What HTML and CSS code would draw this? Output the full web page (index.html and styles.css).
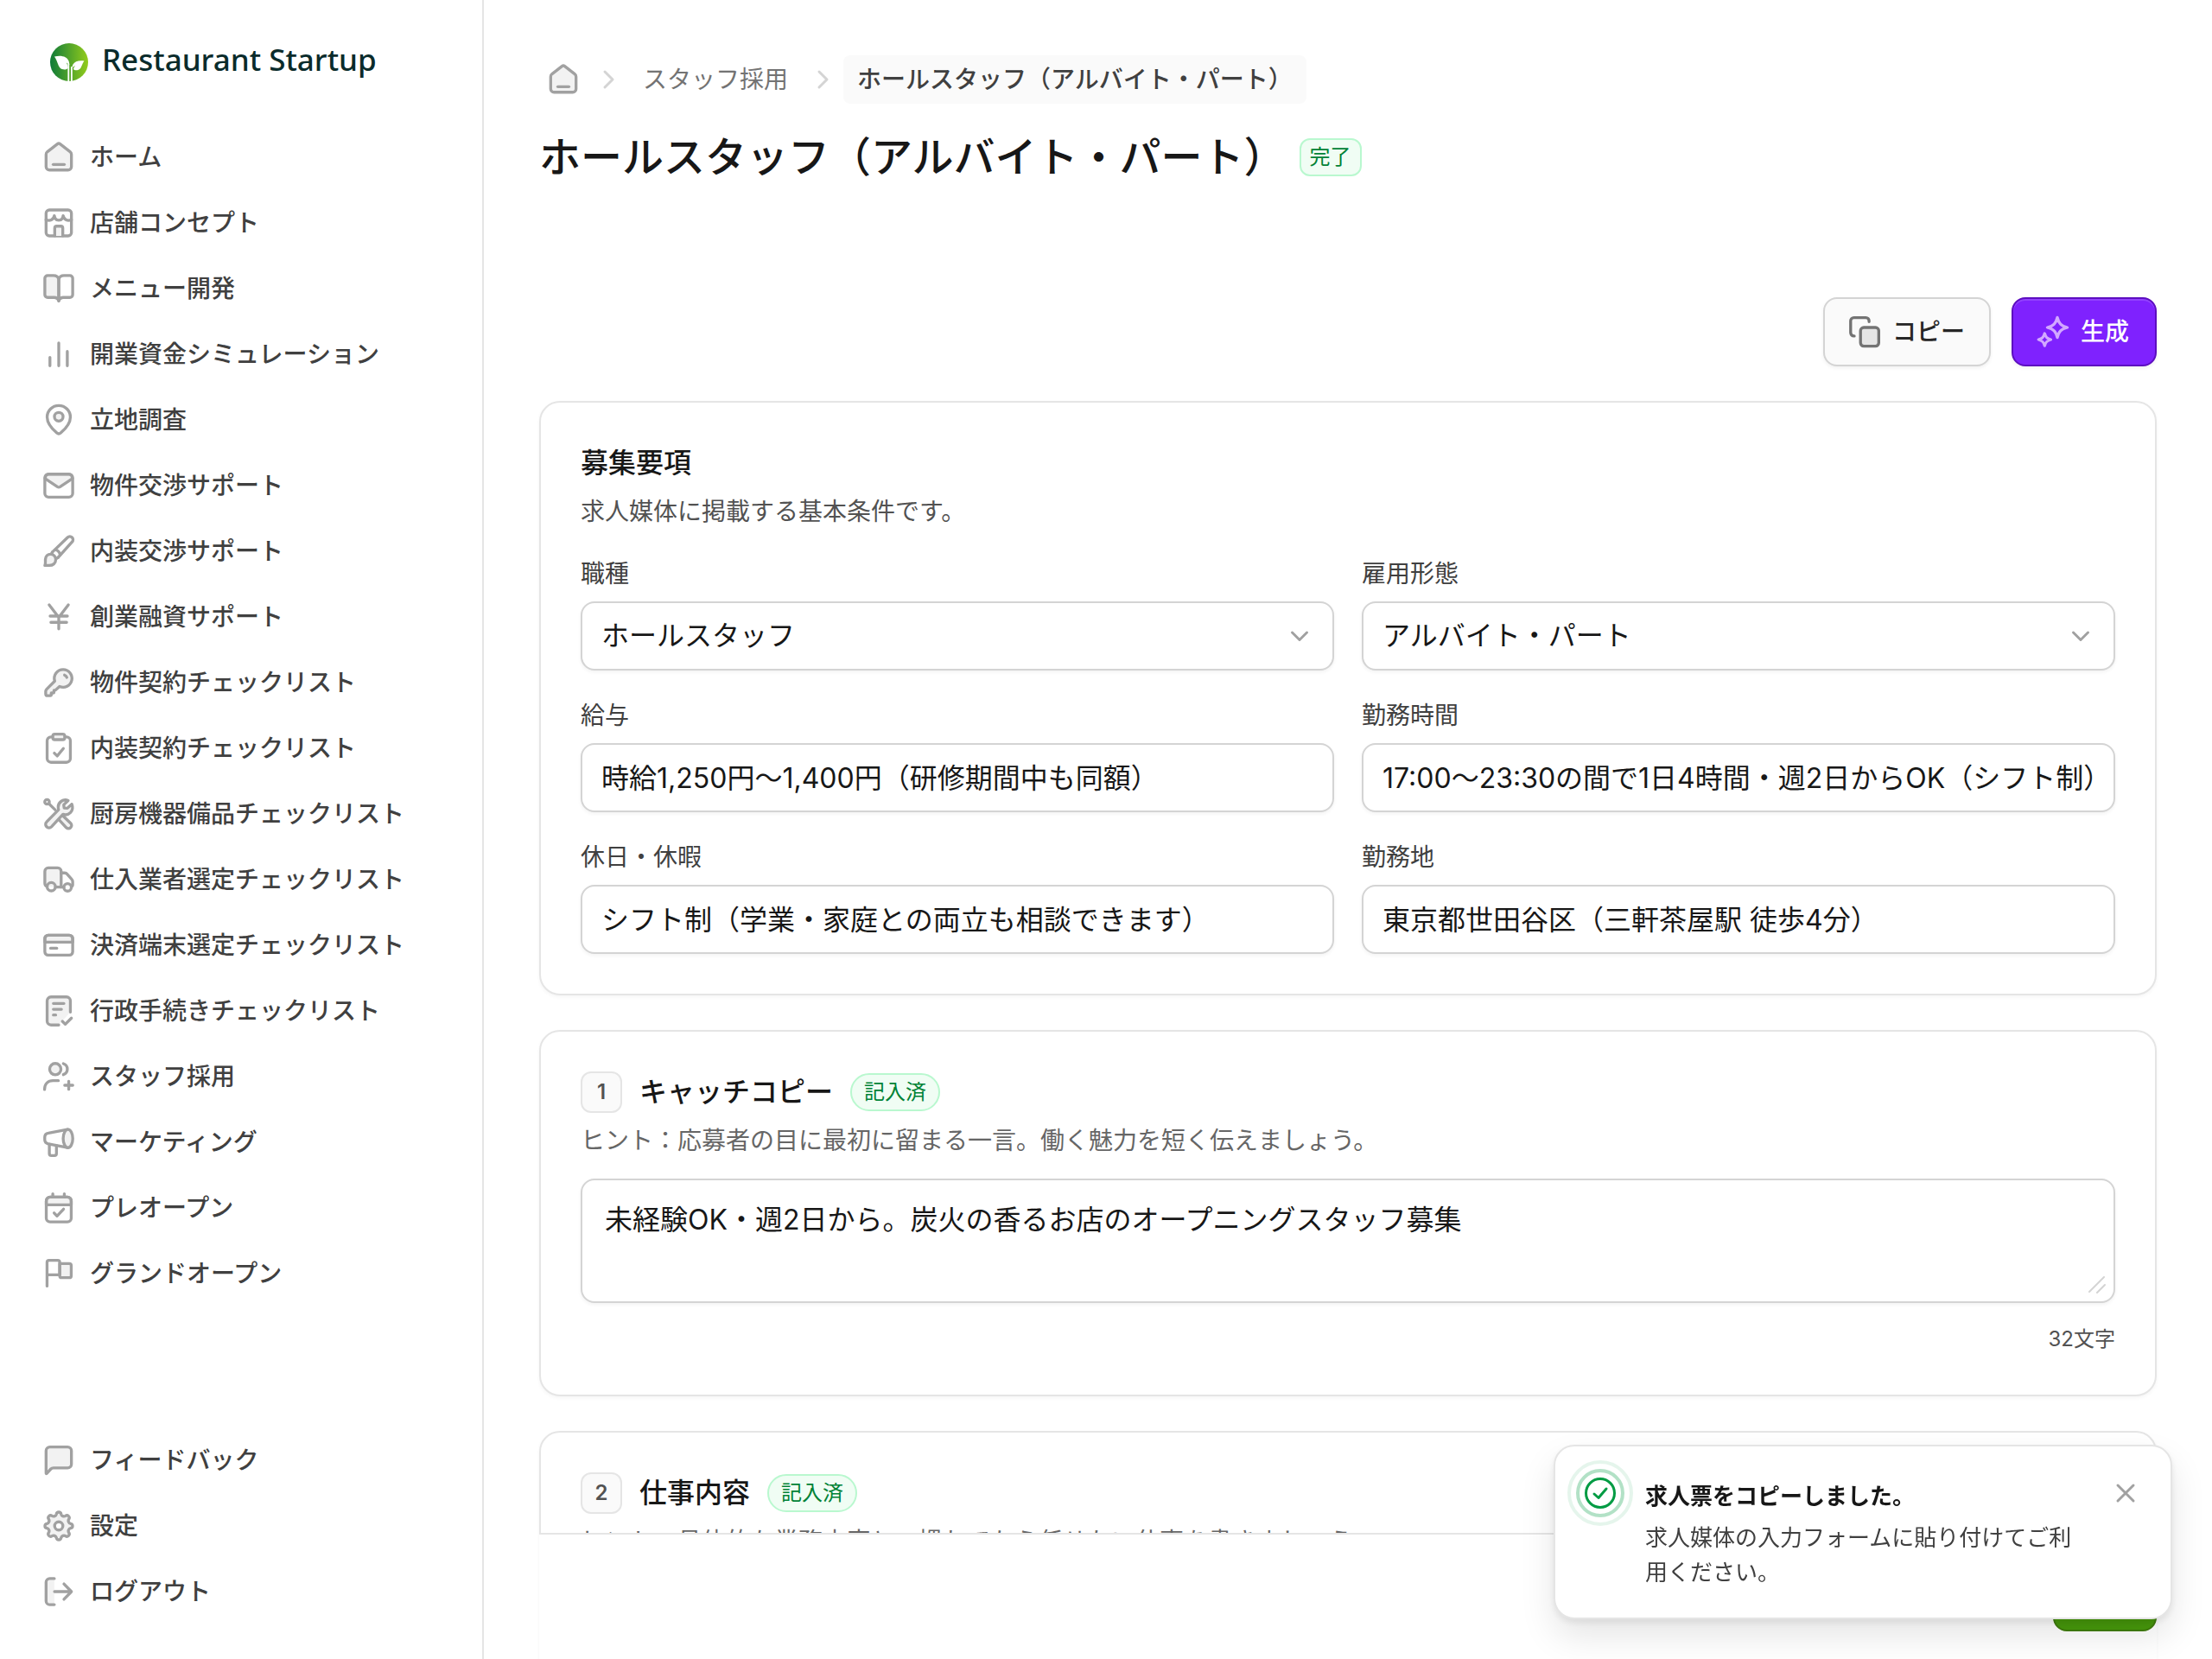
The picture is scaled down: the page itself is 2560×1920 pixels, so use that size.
FILE: index.html
```html
<!DOCTYPE html>
<html lang="ja">
<head>
    <meta charset="UTF-8">
    <meta name="viewport" content="width=device-width, initial-scale=1.0">
    <title>ホールスタッフ（アルバイト・パート） | Restaurant Startup</title>
    <link rel="stylesheet" href="styles.css">
</head>
<body>
    <aside class="sidebar">
        <a href="#" class="logo">
            <svg class="logo-mark" viewBox="0 0 44 44" aria-hidden="true">
                <defs>
                    <linearGradient id="logo-gradient" x1="0" y1="0" x2="1" y2="0">
                        <stop offset="0" stop-color="#0f7a38"/>
                        <stop offset="1" stop-color="#93cc1c"/>
                    </linearGradient>
                </defs>
                <circle cx="22" cy="22" r="22" fill="url(#logo-gradient)"/>
                <path d="M5 15.5c8-2 14.500 0 16.500 5 .6 1.600.8 3 .8 4.500-1-1-2-1.800-3.500-2.600 1 1.500 1.700 3.600 2 6-1.300 2-4 2.600-7 1.600-5-1.700-4.500-8.500-8.800-14.500z" fill="#fff"/>
                <path d="M39.500 20.500c-6-1-11 .5-13 4-.7 1.300-1 2.700-1 4.200 1-1.200 2-2 3.500-2.700-1 1-1.700 2.300-2.100 4 1.300 1.600 3.600 1.700 6 .7 4-1.700 3.500-6.500 6.600-10.200z" fill="#fff"/>
                <path d="M21.300 24v19.800M24.900 28v15.600" stroke="#fff" stroke-width="1.800" fill="none"/>
            </svg>
            <span>Restaurant Startup</span>
        </a>

        <nav class="nav" aria-label="メインメニュー">
            <a href="#" class="nav-item">
                <svg class="icon" viewBox="0 0 18 18"><path class="tint" d="M3.100 6.100 8.300 2.100a1.150 1.150 0 0 1 1.400 0l5.200 4c.45.35.7.9.7 1.450v6.350a1.750 1.750 0 0 1-1.750 1.750H4.150A1.750 1.750 0 0 1 2.400 13.900V7.550c0-.55.25-1.100.7-1.450z"/><path d="M6.100 12.750h5.800"/></svg>
                <span>ホーム</span>
            </a>
            <a href="#" class="nav-item">
                <svg class="icon" viewBox="0 0 18 18"><rect x="2.400" y="2.250" width="13.200" height="13.500" rx="1.700"/><path d="M2.400 7.300c1.900.9 4 .1 4.300-2.100.2 1.600 1.100 2.400 2.300 2.400s2.100-.8 2.300-2.400c.3 2.200 2.400 3 4.300 2.100"/><path class="tint" d="M6.900 15.700v-4a1 1 0 0 1 1-1h2.200a1 1 0 0 1 1 1v4"/></svg>
                <span>店舗コンセプト</span>
            </a>
            <a href="#" class="nav-item">
                <svg class="icon" viewBox="0 0 18 18"><path class="tint" d="M9 4.200C8.700 2.900 7.700 2.200 6.300 2.200H3.200c-.8 0-1.450.65-1.450 1.450v8.500c0 .8.65 1.450 1.450 1.450h3.400c1.300 0 2 .6 2.400 1.800z"/><path d="M9 4.200c.3-1.300 1.300-2 2.700-2h3.100c.8 0 1.450.65 1.450 1.450v8.500c0 .8-.65 1.450-1.450 1.450h-3.400c-1.300 0-2 .6-2.400 1.800z"/></svg>
                <span>メニュー開発</span>
            </a>
            <a href="#" class="nav-item">
                <svg class="icon" viewBox="0 0 18 18"><path d="M4.400 10.600V15M9 3.100V15M13.450 7.500V15"/></svg>
                <span>開業資金シミュレーション</span>
            </a>
            <a href="#" class="nav-item">
                <svg class="icon" viewBox="0 0 18 18"><path d="M15.050 7.500c0 3.500-3.200 6.700-5.050 8.300a1.500 1.500 0 0 1-2 0C6.150 14.200 2.950 11 2.950 7.500a6.050 6 0 0 1 12.100 0z"/><circle class="tint" cx="9" cy="7.350" r="2.250"/></svg>
                <span>立地調査</span>
            </a>
            <a href="#" class="nav-item">
                <svg class="icon" viewBox="0 0 18 18"><path class="tint" d="M1.900 5.300C2 4 2.700 3.100 3.700 3.100h10.600c1 0 1.700.9 1.800 2.200L9.700 9.600a1.300 1.300 0 0 1-1.400 0z"/><rect x="1.750" y="3" width="14.500" height="12" rx="2"/></svg>
                <span>物件交渉サポート</span>
            </a>
            <a href="#" class="nav-item">
                <svg class="icon" viewBox="0 0 18 18"><path d="m5.700 9.400 7.900-7.600a1.650 1.650 0 0 1 2.350 2.350L8.600 12.300"/><path class="tint" d="M1.750 16.400c.5-.8.2-1.900.3-3.200.1-1.600 1.200-2.700 2.700-2.700s2.700 1.200 2.700 2.700c0 2.100-1.500 3.200-3.400 3.200z"/><path d="M7.200 8.200c1.300.3 2.200 1.300 2.500 2.600M5.700 9.400l-.6 1.100M8.600 12.300l-1.100.6"/></svg>
                <span>内装交渉サポート</span>
            </a>
            <a href="#" class="nav-item">
                <svg class="icon" viewBox="0 0 18 18"><path d="m4 2.700 5 6.500 5-6.500M9 9.200v6M4.500 8.550h9M4.900 11.800h8.200"/></svg>
                <span>創業融資サポート</span>
            </a>
            <a href="#" class="nav-item">
                <svg class="icon" viewBox="0 0 18 18"><path class="tint" d="M11.300 2.200a4.600 4.600 0 0 0-4.400 6L2.700 12.400c-.3.3-.5.7-.5 1.100v1.300c0 .6.400 1 1 1h1.400c.3 0 .5-.2.5-.5v-.9h.9c.3 0 .5-.2.500-.5v-.9h.7l2.200-2a4.600 4.600 0 1 0 1.900-8.800z"/><path d="M12 5.100c.6.2 1 .6 1.200 1.200"/></svg>
                <span>物件契約チェックリスト</span>
            </a>
            <a href="#" class="nav-item">
                <svg class="icon" viewBox="0 0 18 18"><path d="M5.700 3.100h-.75a2 2 0 0 0-2 2v9.200a2 2 0 0 0 2 2h8.100a2 2 0 0 0 2-2V5.100a2 2 0 0 0-2-2h-.75"/><rect class="tint" x="5.900" y="1.600" width="6.200" height="2.900" rx="1"/><path d="m6.700 11.500 1.500 1.500 3.200-3.900"/></svg>
                <span>内装契約チェックリスト</span>
            </a>
            <a href="#" class="nav-item">
                <svg class="icon" viewBox="0 0 18 18"><circle cx="2.900" cy="2.700" r="1.200"/><path d="m3.800 3.600 3.300 3.200"/><path class="tint" d="m11.200 10 4 3.800a1.600 1.600 0 0 1-2.300 2.300L9.100 12"/><path class="tint" d="M15.800 3.900 13.500 6l-1.700-.1-.2-1.700L13.900 2c-2.600-1-5.200.8-5.200 3.500 0 .5.100 1 .2 1.300L2.700 13.100a1.700 1.700 0 0 0 2.500 2.600l6-6.500c2.900 1 6-1.700 4.600-5.300z"/></svg>
                <span>厨房機器備品チェックリスト</span>
            </a>
            <a href="#" class="nav-item">
                <svg class="icon" viewBox="0 0 18 18"><path class="tint" d="M2.900 12.500c-.7-.2-1.150-.9-1.150-1.600V4.700c0-1 .8-1.800 1.800-1.800h4.900c1 0 1.800.8 1.800 1.800v8.200H7.300"/><path d="M10.250 5.500h1.800c.5 0 1 .2 1.300.6l2.400 2.700c.3.300.5.800.5 1.200v1.800c0 .4-.2.800-.6 1M10.250 12.900h1.400"/><circle cx="5.100" cy="12.700" r="2.150"/><circle cx="13.600" cy="13" r="1.950"/></svg>
                <span>仕入業者選定チェックリスト</span>
            </a>
            <a href="#" class="nav-item">
                <svg class="icon" viewBox="0 0 18 18"><path class="tint" d="M1.750 7.350V5.500c0-1 .8-1.750 1.750-1.750h11c1 0 1.750.8 1.750 1.750v1.850z"/><rect x="1.750" y="3.750" width="14.500" height="10.400" rx="1.750"/><path d="M4.750 10.550h3.200"/></svg>
                <span>決済端末選定チェックリスト</span>
            </a>
            <a href="#" class="nav-item">
                <svg class="icon" viewBox="0 0 18 18"><path class="tint" d="M15.050 9.600V3.700a2 2 0 0 0-2-2h-8.100a2 2 0 0 0-2 2v10.600a2 2 0 0 0 2 2H9"/><path d="M6.200 5.100h5.500M6.200 8.150h4.200M6.200 11.100h1.200M10.900 14.400l1.500 1.500 3.200-3.200"/></svg>
                <span>行政手続きチェックリスト</span>
            </a>
            <a href="#" class="nav-item">
                <svg class="icon" viewBox="0 0 18 18"><circle class="tint" cx="7.200" cy="5.100" r="2.950"/><path d="M11.400 2.250a3 3 0 0 1 0 5.700M1.600 15.700c0-2.900 1.800-4.600 4.400-4.600h2.800M14.200 11.400v4.200M12.100 13.500h4.200"/></svg>
                <span>スタッフ採用</span>
            </a>
            <a href="#" class="nav-item">
                <svg class="icon" viewBox="0 0 18 18"><path d="m13.600 2.300-10 1.900c-1.200.2-1.900 1-1.900 2.100v1.300c0 1.100.7 1.900 1.900 2.200l10 2"/><path d="M4.100 10v4.900c0 .6.400 1 1 1h1.700c.6 0 1-.4 1-1v-4.200"/><ellipse class="tint" cx="13.800" cy="7.050" rx="2.500" ry="4.750"/></svg>
                <span>マーケティング</span>
            </a>
            <a href="#" class="nav-item">
                <svg class="icon" viewBox="0 0 18 18"><path class="tint" d="M2.500 7.350v-2c0-1.100.9-2 2-2h9c1.100 0 2 .9 2 2v2z"/><rect x="2.500" y="3.350" width="13" height="12.900" rx="2"/><path d="M5.900 1.600v1.700M11.900 1.600v1.700M6.600 11.600l1.500 1.600 3.400-3.600"/></svg>
                <span>プレオープン</span>
            </a>
            <a href="#" class="nav-item">
                <svg class="icon" viewBox="0 0 18 18"><path class="tint" d="M9.500 3.800h5c.6 0 1 .4 1 1v5.300c0 .6-.4 1-1 1h-4c-.6 0-1-.4-1-1z"/><path d="M2.900 15.500V3.100c0-.6.400-1 1-1h4.600c.6 0 1 .4 1 1v6.500H2.900"/></svg>
                <span>グランドオープン</span>
            </a>
        </nav>

        <nav class="nav nav-bottom" aria-label="アカウント">
            <a href="#" class="nav-item">
                <svg class="icon" viewBox="0 0 18 18"><path class="tint" d="M2.400 15.900V4.100c0-1.100.9-2 2-2h9.200c1.100 0 2 .9 2 2V11c0 1.100-.9 2-2 2H6.200c-.5 0-1 .2-1.300.5l-2.200 2.400c-.1.100-.3.100-.3 0z"/></svg>
                <span>フィードバック</span>
            </a>
            <a href="#" class="nav-item">
                <svg class="icon" viewBox="0 0 18 18"><path class="tint" d="M15.180 7.770A1.250 1.250 0 0 1 15.180 10.230A1.500 1.500 0 0 0 14.240 12.500A1.250 1.250 0 0 1 12.500 14.240A1.500 1.500 0 0 0 10.230 15.180A1.250 1.250 0 0 1 7.770 15.180A1.500 1.500 0 0 0 5.500 14.240A1.250 1.250 0 0 1 3.760 12.500A1.500 1.500 0 0 0 2.820 10.230A1.250 1.250 0 0 1 2.820 7.770A1.500 1.500 0 0 0 3.760 5.500A1.250 1.250 0 0 1 5.500 3.760A1.500 1.500 0 0 0 7.770 2.820A1.250 1.250 0 0 1 10.230 2.820A1.500 1.500 0 0 0 12.500 3.760A1.250 1.250 0 0 1 14.240 5.500A1.500 1.500 0 0 0 15.180 7.770z"/><circle class="hole" cx="9" cy="9" r="2.150"/></svg>
                <span>設定</span>
            </a>
            <a href="#" class="nav-item">
                <svg class="icon" viewBox="0 0 18 18"><path class="tint-only" d="M6.700 2.200H4.300c-1 0-1.900.9-1.900 1.900v9.800c0 1 .9 1.900 1.900 1.900h2.400z"/><path d="M6.700 2.200H4.300c-1 0-1.900.9-1.900 1.900v9.800c0 1 .9 1.900 1.900 1.900h2.400M6.800 9h8.700M11.700 5l3.900 4-3.900 4"/></svg>
                <span>ログアウト</span>
            </a>
        </nav>
    </aside>

    <main class="main">
        <nav class="breadcrumb" aria-label="パンくずリスト">
            <a href="#" class="crumb crumb-home" aria-label="ホーム">
                <svg class="icon" viewBox="0 0 18 18"><path class="tint" d="M3.100 6.100 8.300 2.100a1.150 1.150 0 0 1 1.400 0l5.200 4c.45.35.7.9.7 1.450v6.350a1.750 1.750 0 0 1-1.750 1.750H4.150A1.750 1.750 0 0 1 2.400 13.900V7.550c0-.55.25-1.100.7-1.450z"/><path d="M6.100 12.750h5.800"/></svg>
            </a>
            <svg class="crumb-arrow" viewBox="0 0 32 32" aria-hidden="true"><path d="m12 7 9 9-9 9"/></svg>
            <a href="#" class="crumb">スタッフ採用</a>
            <svg class="crumb-arrow" viewBox="0 0 32 32" aria-hidden="true"><path d="m12 7 9 9-9 9"/></svg>
            <span class="crumb crumb-current" aria-current="page">ホールスタッフ（アルバイト・パート）</span>
        </nav>

        <header class="page-header">
            <h1>ホールスタッフ（アルバイト・パート）</h1>
            <span class="badge">完了</span>
        </header>

        <div class="actions">
            <button type="button" class="btn btn-secondary">
                <svg class="icon" viewBox="0 0 18 18"><path d="M3.600 11.200h-.2c-1 0-1.700-.8-1.700-1.700V3.300c0-1 .8-1.700 1.700-1.700h6.200c1 0 1.700.8 1.700 1.700v.4"/><rect class="tint" x="6.850" y="6.750" width="9.500" height="9.700" rx="1.700"/></svg>
                <span>コピー</span>
            </button>
            <button type="button" class="btn btn-primary">
                <svg class="icon" viewBox="0 0 18 18"><path d="M11.250 1.500c.8 3.200 1.900 4.400 5.200 5.250-3.300.85-4.400 2-5.200 5.250-.8-3.250-1.900-4.400-5.200-5.250 3.300-.85 4.400-2.050 5.200-5.250z"/><path d="M4.650 9.900c.5 1.900 1.200 2.600 3.200 3.150-2 .55-2.700 1.300-3.200 3.200-.5-1.900-1.200-2.650-3.200-3.200 2-.55 2.700-1.250 3.200-3.150z"/></svg>
                <span>生成</span>
            </button>
        </div>

        <section class="card">
            <h2>募集要項</h2>
            <p class="card-description">求人媒体に掲載する基本条件です。</p>
            <div class="form-grid">
                <div class="field">
                    <label for="job-type">職種</label>
                    <div class="select-wrap">
                        <select id="job-type" class="control">
                            <option>ホールスタッフ</option>
                        </select>
                        <svg class="select-arrow" viewBox="0 0 32 32" aria-hidden="true"><path d="m7.500 12 8.500 8.500 8.500-8.500"/></svg>
                    </div>
                </div>
                <div class="field">
                    <label for="employment">雇用形態</label>
                    <div class="select-wrap">
                        <select id="employment" class="control">
                            <option>アルバイト・パート</option>
                        </select>
                        <svg class="select-arrow" viewBox="0 0 32 32" aria-hidden="true"><path d="m7.500 12 8.500 8.500 8.500-8.500"/></svg>
                    </div>
                </div>
                <div class="field">
                    <label for="salary">給与</label>
                    <input id="salary" class="control" type="text" value="時給1,250円〜1,400円（研修期間中も同額）">
                </div>
                <div class="field">
                    <label for="hours">勤務時間</label>
                    <input id="hours" class="control" type="text" value="17:00〜23:30の間で1日4時間・週2日からOK（シフト制）">
                </div>
                <div class="field">
                    <label for="holiday">休日・休暇</label>
                    <input id="holiday" class="control" type="text" value="シフト制（学業・家庭との両立も相談できます）">
                </div>
                <div class="field">
                    <label for="place">勤務地</label>
                    <input id="place" class="control" type="text" value="東京都世田谷区（三軒茶屋駅 徒歩4分）">
                </div>
            </div>
        </section>

        <section class="card">
            <div class="section-title">
                <span class="section-number">1</span>
                <h2><label for="catch-copy">キャッチコピー</label></h2>
                <span class="badge badge-round">記入済</span>
            </div>
            <p class="hint">ヒント：応募者の目に最初に留まる一言。働く魅力を短く伝えましょう。</p>
            <div class="textarea-wrap">
                <textarea id="catch-copy">未経験OK・週2日から。炭火の香るお店のオープニングスタッフ募集</textarea>
                <svg class="grip" viewBox="0 0 20 20" aria-hidden="true"><path d="M1 18 18 1M10 19l9-9"/></svg>
            </div>
            <p class="count">32文字</p>
        </section>

        <section class="card">
            <div class="section-title">
                <span class="section-number">2</span>
                <h2><label for="job-description">仕事内容</label></h2>
                <span class="badge badge-round">記入済</span>
            </div>
            <p class="hint">ヒント：具体的な業務内容と、慣れてから任せたい仕事を書きましょう。</p>
            <div class="textarea-wrap">
                <textarea id="job-description"></textarea>
            </div>
        </section>

        <footer class="save-bar">
            <button type="submit" class="btn btn-save">保存</button>
        </footer>
    </main>

    <div class="toast" role="status">
        <svg class="toast-icon" viewBox="0 0 80 80" aria-hidden="true">
            <circle class="ring" cx="40" cy="40" r="36" opacity=".1"/>
            <circle class="ring" cx="40" cy="40" r="26" opacity=".3"/>
            <circle cx="40" cy="40" r="16.500"/>
            <path d="m33 41 5 4.500L47 35"/>
        </svg>
        <div class="toast-body">
            <p class="toast-title">求人票をコピーしました。</p>
            <p class="toast-text">求人媒体の入力フォームに貼り付けてご利用ください。</p>
        </div>
        <button type="button" class="toast-close" aria-label="閉じる">
            <svg viewBox="0 0 40 40" aria-hidden="true"><path d="m11 11 18 18M29 11 11 29"/></svg>
        </button>
    </div>
</body>
</html>
```

FILE: styles.css
```css
* {
    margin: 0;
    padding: 0;
    box-sizing: border-box;
}

body {
    display: flex;
    height: 100vh;
    overflow: hidden;
    font-family: Inter, "Noto Sans CJK JP", sans-serif;
    font-size: 28px;
    line-height: 40px;
    color: #171717;
    background: #fff;
}

a {
    color: inherit;
    text-decoration: none;
}

button,
input,
select,
textarea {
    font: inherit;
    color: inherit;
}

svg {
    display: block;
    flex: none;
    fill: none;
    stroke: currentColor;
    stroke-linecap: round;
    stroke-linejoin: round;
}

/* icons */
.icon {
    width: 40px;
    height: 40px;
    stroke-width: 1.5;
    color: #a1a1a1;
}

.icon .tint {
    fill: #f2f2f2;
}

.icon .tint-only {
    fill: #f2f2f2;
    stroke: none;
}

.icon .hole {
    fill: #fff;
}

/* sidebar */
.sidebar {
    display: flex;
    flex-direction: column;
    flex: none;
    width: 560px;
    padding: 40px 0;
    border-right: 2px solid #e5e5e5;
}

.logo {
    display: flex;
    align-items: center;
    gap: 16px;
    height: 64px;
    margin-bottom: 40px;
    padding-left: 58px;
    font-family: "Noto Sans", sans-serif;
    font-size: 35px;
    font-weight: 500;
    color: #0a2b2b;
}

.logo span {
    padding-bottom: 6px;
}

.logo-mark {
    width: 44px;
    height: 44px;
    stroke: none;
}

.nav {
    display: flex;
    flex-direction: column;
}

.nav-bottom {
    margin-top: auto;
}

.nav-item {
    display: flex;
    align-items: center;
    gap: 16px;
    height: 76px;
    padding: 0 48px;
    font-weight: 500;
    color: #404040;
}

/* main */
.main {
    flex: 1;
    min-width: 0;
    padding: 64px 64px 0;
    overflow-y: auto;
    scrollbar-width: none;
}

.breadcrumb {
    display: flex;
    align-items: center;
    gap: 8px;
    margin-bottom: 32px;
    color: #737373;
}

.crumb {
    display: flex;
    align-items: center;
    height: 56px;
    padding: 0 16px;
    border-radius: 8px;
}

.crumb-home {
    padding: 0 8px;
}

.crumb-current {
    font-weight: 500;
    color: #404040;
    background: #fafafa;
}

.crumb-arrow {
    width: 32px;
    height: 32px;
    stroke: #d4d4d4;
    stroke-width: 3;
}

.page-header {
    display: flex;
    align-items: center;
    gap: 16px;
    min-height: 60px;
    margin-bottom: 132px;
}

h1 {
    font-size: 48px;
    font-weight: 500;
    line-height: 60px;
}

h2 {
    font-size: 32px;
    font-weight: 500;
    line-height: 48px;
}

.badge {
    display: flex;
    align-items: center;
    height: 44px;
    padding: 0 10px;
    border: 2px solid #b9f8cf;
    border-radius: 12px;
    font-size: 24px;
    color: #008236;
    background: #f0fdf4;
}

.badge-round {
    padding: 0 14px;
    border-radius: 22px;
}

/* buttons */
.actions {
    display: flex;
    justify-content: flex-end;
    gap: 24px;
    margin-bottom: 40px;
}

.btn {
    display: flex;
    align-items: center;
    gap: 12px;
    height: 80px;
    padding: 0 28px 0 26px;
    border: 2px solid #d4d4d4;
    border-radius: 16px;
    font-weight: 500;
    cursor: pointer;
}

.btn-secondary {
    color: #262626;
    background: #fafafa;
    box-shadow: 0 2px 4px rgba(0, 0, 0, 0.06);
}

.btn-secondary .icon {
    color: #737373;
}

.btn-secondary .icon .tint {
    fill: #e5e5e5;
}

.btn-primary {
    padding-right: 30px;
    border-color: #5d0ec0;
    color: #fff;
    background: #7f22fe;
    box-shadow: inset 0 2px 0 rgba(255, 255, 255, 0.15), 0 2px 4px rgba(0, 0, 0, 0.06);
}

.btn-primary .icon {
    color: #d2a8ff;
}

.btn-save {
    padding: 0 30px;
    border-color: #3f7d0c;
    color: #fff;
    background: #479a0b;
}

/* cards */
.card {
    margin-bottom: 40px;
    padding: 46px;
    border: 2px solid #e5e5e5;
    border-radius: 24px;
    background: #fff;
    box-shadow: 0 2px 4px rgba(0, 0, 0, 0.04);
}

.card-description {
    margin: 12px 0 32px;
    color: #525252;
}

.form-grid {
    display: grid;
    grid-template-columns: 1fr 1fr;
    gap: 32px;
}

.field {
    display: flex;
    flex-direction: column;
    gap: 12px;
    min-width: 0;
}

.field label {
    color: #404040;
}

.control {
    width: 100%;
    height: 80px;
    padding: 0 22px;
    border: 2px solid #d4d4d4;
    border-radius: 16px;
    font-size: 32px;
    background: #fff;
    box-shadow: 0 2px 4px rgba(0, 0, 0, 0.05);
}

input.control {
    padding-bottom: 4px;
}

select.control {
    appearance: none;
}

.select-wrap,
.textarea-wrap {
    position: relative;
}

.select-arrow {
    position: absolute;
    top: 24px;
    right: 24px;
    width: 32px;
    height: 32px;
    stroke: #a1a1a1;
    stroke-width: 3;
    pointer-events: none;
}

.section-title {
    display: flex;
    align-items: center;
    gap: 20px;
    margin-bottom: 12px;
}

.section-number {
    display: flex;
    align-items: center;
    justify-content: center;
    width: 48px;
    height: 48px;
    border: 2px solid #e5e5e5;
    border-radius: 12px;
    font-size: 24px;
    font-weight: 600;
    color: #525252;
    background: #fafafa;
}

.hint {
    margin-bottom: 24px;
    color: #666;
}

textarea {
    display: block;
    width: 100%;
    height: 144px;
    padding: 22px 26px;
    border: 2px solid #d4d4d4;
    border-radius: 16px;
    font-size: 32px;
    line-height: 48px;
    background: #fff;
    box-shadow: 0 2px 4px rgba(0, 0, 0, 0.05);
    resize: none;
}

.grip {
    position: absolute;
    right: 11px;
    bottom: 11px;
    width: 20px;
    height: 20px;
    stroke: #d4d4d4;
    stroke-width: 2;
}

.count {
    margin-top: 24px;
    font-size: 24px;
    line-height: 36px;
    text-align: right;
    color: #525252;
}

.save-bar {
    position: sticky;
    bottom: 0;
    display: flex;
    justify-content: flex-end;
    padding: 32px 0;
    border-top: 2px solid #e5e5e5;
    background: #fff;
}

/* toast */
.toast {
    position: fixed;
    right: 46px;
    bottom: 46px;
    display: flex;
    align-items: flex-start;
    gap: 12px;
    width: 716px;
    padding: 14px 32px 32px 12px;
    border: 2px solid #e5e5e5;
    border-radius: 24px;
    font-size: 26px;
    background: #fff;
    box-shadow: 0 20px 40px rgba(0, 0, 0, 0.1), 0 4px 8px rgba(0, 0, 0, 0.08);
}

.toast-icon {
    width: 80px;
    height: 80px;
    stroke: #009b43;
    stroke-width: 3;
}

.toast-icon .ring {
    stroke-width: 4;
}

.toast-body {
    flex: 1;
    padding: 24px 16px 0 0;
}

.toast-title {
    margin-bottom: 8px;
    font-weight: 700;
}

.toast-text {
    color: #404040;
}

.toast-close {
    margin-top: 20px;
    border: none;
    background: none;
    color: #a1a1a1;
    cursor: pointer;
}

.toast-close svg {
    width: 40px;
    height: 40px;
    stroke-width: 3;
}
```
